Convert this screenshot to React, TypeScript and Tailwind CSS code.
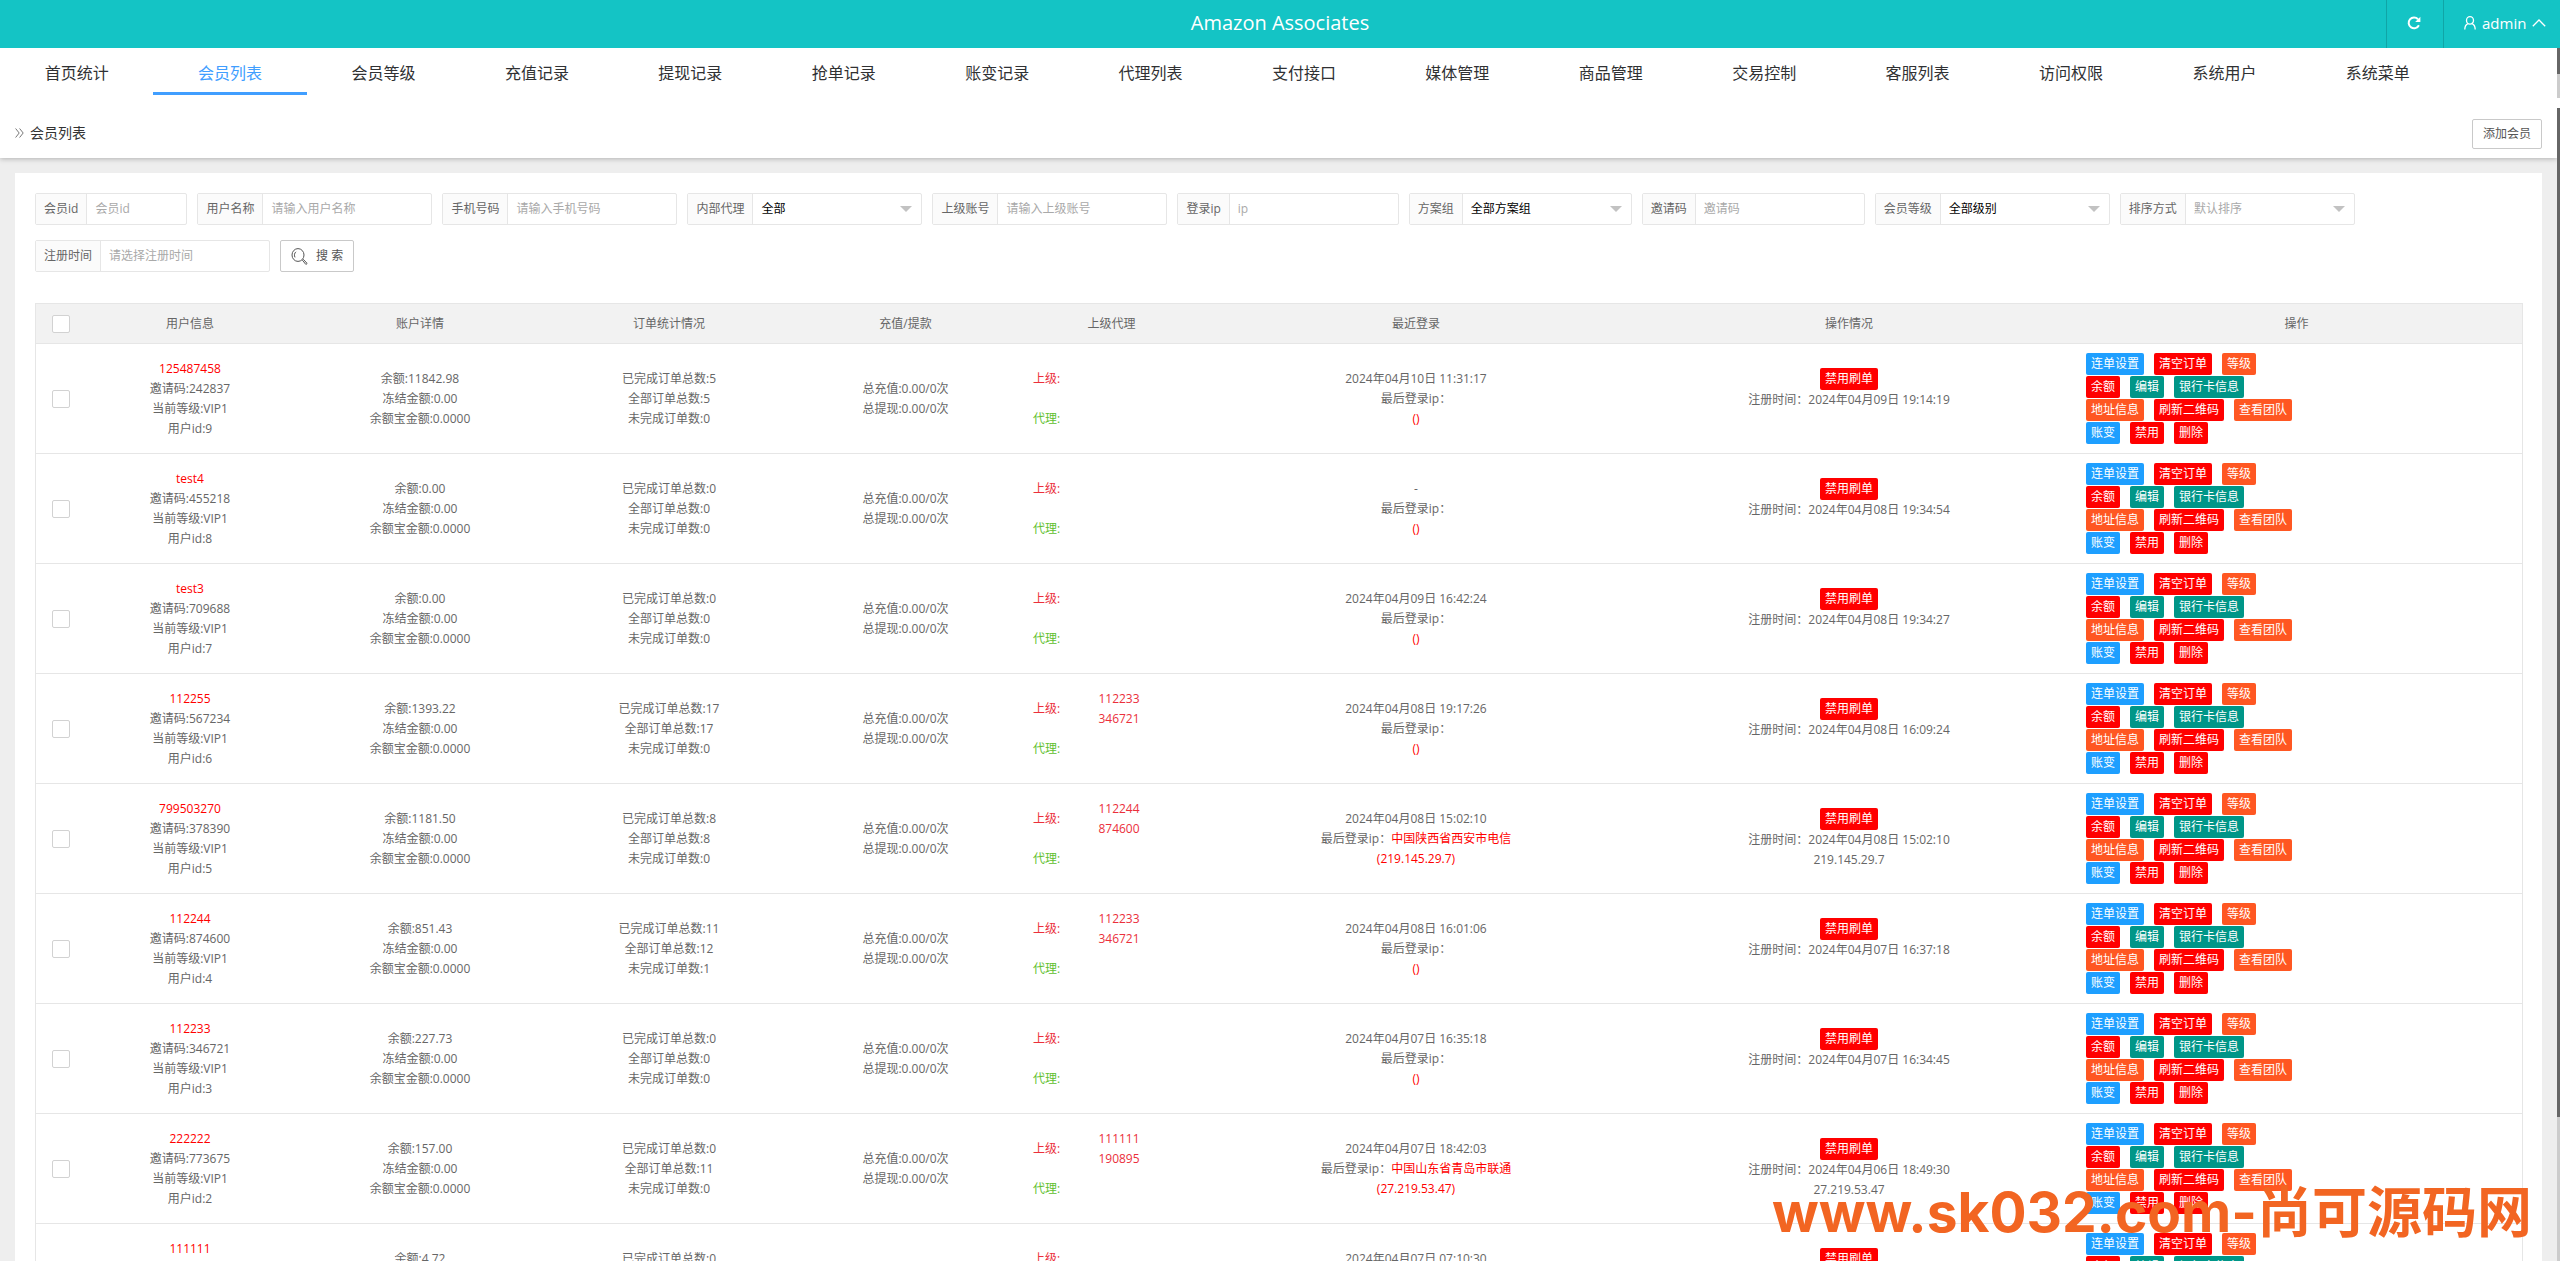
import { useState } from 'react'

const TABS = [
  '首页统计', '会员列表', '会员等级', '充值记录', '提现记录', '抢单记录', '账变记录', '代理列表',
  '支付接口', '媒体管理', '商品管理', '交易控制', '客服列表', '访问权限', '系统用户', '系统菜单',
]

type Filter = {
  id: string
  label: string
  placeholder?: string
  options?: string[]
  muted?: boolean
  narrow?: boolean
}

const FILTERS: Filter[] = [
  { id: 'uid', label: '会员id', placeholder: '会员id', narrow: true },
  { id: 'username', label: '用户名称', placeholder: '请输入用户名称' },
  { id: 'tel', label: '手机号码', placeholder: '请输入手机号码' },
  { id: 'internal', label: '内部代理', options: ['全部', '是', '否'] },
  { id: 'parent', label: '上级账号', placeholder: '请输入上级账号' },
  { id: 'ip', label: '登录ip', placeholder: 'ip' },
  { id: 'group', label: '方案组', options: ['全部方案组'] },
  { id: 'invite', label: '邀请码', placeholder: '邀请码' },
  { id: 'level', label: '会员等级', options: ['全部级别', 'VIP1', 'VIP2'] },
  { id: 'order', label: '排序方式', options: ['默认排序'], muted: true },
  { id: 'regtime', label: '注册时间', placeholder: '请选择注册时间' },
]

type Member = {
  id: number
  name: string
  code: string
  balance: string
  done: number
  total: number
  undone: number
  parent?: [string, string]
  login: string
  area?: string
  ip?: string
  registered: string
}

const MEMBERS: Member[] = [
  { id: 9, name: '125487458', code: '242837', balance: '11842.98', done: 5, total: 5, undone: 0, login: '2024年04月10日 11:31:17', registered: '2024年04月09日 19:14:19' },
  { id: 8, name: 'test4', code: '455218', balance: '0.00', done: 0, total: 0, undone: 0, login: '-', registered: '2024年04月08日 19:34:54' },
  { id: 7, name: 'test3', code: '709688', balance: '0.00', done: 0, total: 0, undone: 0, login: '2024年04月09日 16:42:24', registered: '2024年04月08日 19:34:27' },
  { id: 6, name: '112255', code: '567234', balance: '1393.22', done: 17, total: 17, undone: 0, parent: ['112233', '346721'], login: '2024年04月08日 19:17:26', registered: '2024年04月08日 16:09:24' },
  { id: 5, name: '799503270', code: '378390', balance: '1181.50', done: 8, total: 8, undone: 0, parent: ['112244', '874600'], login: '2024年04月08日 15:02:10', area: '中国陕西省西安市电信', ip: '219.145.29.7', registered: '2024年04月08日 15:02:10' },
  { id: 4, name: '112244', code: '874600', balance: '851.43', done: 11, total: 12, undone: 1, parent: ['112233', '346721'], login: '2024年04月08日 16:01:06', registered: '2024年04月07日 16:37:18' },
  { id: 3, name: '112233', code: '346721', balance: '227.73', done: 0, total: 0, undone: 0, login: '2024年04月07日 16:35:18', registered: '2024年04月07日 16:34:45' },
  { id: 2, name: '222222', code: '773675', balance: '157.00', done: 0, total: 11, undone: 0, parent: ['111111', '190895'], login: '2024年04月07日 18:42:03', area: '中国山东省青岛市联通', ip: '27.219.53.47', registered: '2024年04月06日 18:49:30' },
  { id: 1, name: '111111', code: '190895', balance: '4.72', done: 0, total: 0, undone: 0, login: '2024年04月07日 07:10:30', registered: '2024年04月06日 18:40:12' },
]

const BLUE = 'bg-[#1e9fff]'
const RED = 'bg-[#ff0000]'
const ORANGE = 'bg-[#ff5722]'
const GREEN = 'bg-[#009688]'

const ACTIONS: [string, string][][] = [
  [['连单设置', BLUE], ['清空订单', RED], ['等级', ORANGE]],
  [['余额', RED], ['编辑', GREEN], ['银行卡信息', GREEN]],
  [['地址信息', ORANGE], ['刷新二维码', RED], ['查看团队', ORANGE]],
  [['账变', BLUE], ['禁用', RED], ['删除', RED]],
]

const HEADS = ['用户信息', '账户详情', '订单统计情况', '充值/提款', '上级代理', '最近登录', '操作情况', '操作']

function Tag({ text, color }: { text: string; color: string }) {
  return (
    <button className={`h-[22px] px-[5px] rounded-xs text-xs leading-[22px] text-white ${color}`}>{text}</button>
  )
}

function Check({ label }: { label: string }) {
  return (
    <input
      type="checkbox"
      aria-label={label}
      className="block mx-auto size-[18px] appearance-none rounded-xs border border-[#d2d2d2] bg-white checked:bg-[#5fb878]"
    />
  )
}

function FilterField({ filter }: { filter: Filter }) {
  const width = filter.narrow ? 'w-[99px]' : 'w-[168px]'
  return (
    <div className="flex h-8 rounded-xs border border-[#e6e6e6] bg-white">
      <label htmlFor={filter.id} className="px-2 leading-[30px] bg-[#fbfbfb] border-r border-[#e6e6e6] whitespace-nowrap">
        {filter.label}
      </label>
      {filter.options ? (
        <div className="relative">
          <select
            id={filter.id}
            className={`${width} h-full pl-2 pr-8 appearance-none bg-transparent outline-none ${filter.muted ? 'text-[#a9a9a9]' : 'text-black'}`}
          >
            {filter.options.map(o => <option key={o}>{o}</option>)}
          </select>
          <span className="absolute right-[9px] top-3 border-x-6 border-t-6 border-x-transparent border-t-[#c2c2c2] pointer-events-none" />
        </div>
      ) : (
        <input
          id={filter.id}
          placeholder={filter.placeholder}
          className={`${width} pl-2 outline-none placeholder:text-[#a9a9a9]`}
        />
      )}
    </div>
  )
}

function MemberRow({ member: m }: { member: Member }) {
  return (
    <tr className="h-[110px] text-center [&>td]:border-b [&>td]:border-[#e6e6e6] [&>td]:px-[15px]">
      <td><Check label={`选择 ${m.name}`} /></td>
      <td>
        <a href="#" className="text-[#ff0000]">{m.name}</a>
        <p>邀请码:{m.code}</p>
        <p>当前等级:VIP1</p>
        <p>用户id:{m.id}</p>
      </td>
      <td>
        <p>余额:{m.balance}</p>
        <p>冻结金额:0.00</p>
        <p>余额宝金额:0.0000</p>
      </td>
      <td>
        <p>已完成订单总数:{m.done}</p>
        <p>全部订单总数:{m.total}</p>
        <p>未完成订单数:{m.undone}</p>
      </td>
      <td>
        <p>总充值:0.00/0次</p>
        <p>总提现:0.00/0次</p>
      </td>
      <td>
        <div className="grid grid-cols-[28px_116px] grid-rows-[40px_40px] items-center">
          <span className="text-left text-[#eb2f3b]">上级:</span>
          <div className="text-[#eb2f3b]">{m.parent?.map(p => <p key={p}>{p}</p>)}</div>
          <span className="text-left text-[#5fc02e]">代理:</span>
        </div>
      </td>
      <td>
        <p>{m.login}</p>
        <p>最后登录ip：<span className="text-[#ff0000]">{m.area}</span></p>
        <p className="text-[#ff0000]">({m.ip})</p>
      </td>
      <td>
        <div className="flex flex-col items-center">
          <Tag text="禁用刷单" color={RED} />
          <p>注册时间：{m.registered}</p>
          <p className="h-5">{m.ip}</p>
        </div>
      </td>
      <td>
        <div className="flex flex-col gap-px">
          {ACTIONS.map((line, i) => (
            <div key={i} className="flex gap-2.5">
              {line.map(([text, color]) => <Tag key={text} text={text} color={color} />)}
            </div>
          ))}
        </div>
      </td>
    </tr>
  )
}

export default function App() {
  const [tab, setTab] = useState('会员列表')

  return (
    <div className="relative flex flex-col h-screen overflow-hidden bg-white text-xs leading-5 text-[#666] font-['Open_Sans','Noto_Sans_CJK_SC',sans-serif]">
      {/* Top bar */}
      <header className="grid grid-cols-[1fr_auto_1fr] h-12 shrink-0 bg-[#14c4c5] text-white">
        <h1 className="col-start-2 text-xl leading-[46px]">Amazon Associates</h1>
        <div className="flex justify-end">
          <button aria-label="刷新" className="w-[57px] flex items-center justify-center pr-0.5 pb-0.5 border-l border-[#10a5a6]">
            <svg viewBox="0 0 14 14" className="size-3.5" fill="none" stroke="currentColor" strokeWidth="2">
              <path d="M11.9 9.3A5.4 5.4 0 1 1 11 3.2" />
              <path d="M13.4 0.8V6H8.2Z" fill="currentColor" stroke="none" />
            </svg>
          </button>
          <button className="w-[117px] flex items-center pl-5 pb-0.5 border-l border-[#10a5a6] text-[15px]">
            <svg viewBox="0 0 12 14" className="w-3 h-3.5 mr-1.5" fill="none" stroke="currentColor" strokeWidth="1.3">
              <ellipse cx="6" cy="4.4" rx="3.5" ry="3.7" />
              <path d="M0.8 13.6C0.8 10.2 2.2 8.3 4 7.6M11.2 13.6C11.2 10.2 9.8 8.3 8 7.6" />
            </svg>
            admin
            <svg viewBox="0 0 14 8" className="w-3.5 h-2 ml-1.5" fill="none" stroke="currentColor" strokeWidth="1.3">
              <path d="M0.8 7.2 7 1l6.2 6.2" />
            </svg>
          </button>
        </div>
      </header>

      {/* Module tabs */}
      <div className="relative z-10 flex h-[60px] shrink-0 bg-white">
        <nav className="flex flex-1">
          {TABS.map(t => (
            <button
              key={t}
              onClick={() => setTab(t)}
              className={`w-[6%] h-[47px] pt-1.5 border-b-3 text-base ${
                t === tab ? 'border-[#409eff] text-[#409eff]' : 'border-transparent text-[#303133]'
              }`}
            >
              {t}
            </button>
          ))}
        </nav>
        <div className="w-[3px] h-[50px] bg-[#ccc]"><div className="h-[26px] bg-[#666]" /></div>
      </div>

      <div className="flex flex-1 min-h-0">
        <main className="flex-1 min-w-0 flex flex-col bg-[#eee]">
          <div className="flex items-center justify-between h-[50px] shrink-0 px-[15px] bg-white shadow-[0_1px_5px_rgba(0,0,0,0.25)]">
            <h2 className="flex items-center gap-1.5 text-sm text-[#333]">
              <svg viewBox="0 0 9 10" className="w-[9px] h-2.5" fill="none" stroke="#777" strokeWidth="1">
                <path d="M0.6 0.5 4.2 5 0.6 9.5M4.6 0.5 8.2 5 4.6 9.5" />
              </svg>
              会员列表
            </h2>
            <button className="h-[30px] px-2.5 mt-0.5 rounded-xs border border-[#c9c9c9] text-[#555]">添加会员</button>
          </div>

          <div className="flex-1 min-h-0 mx-[15px] mt-[15px] px-5 pt-5 overflow-hidden bg-white">
            <form className="flex flex-wrap gap-x-2.5 gap-y-[15px]" onSubmit={e => e.preventDefault()}>
              {FILTERS.map(f => <FilterField key={f.id} filter={f} />)}
              <button className="flex items-center gap-2 h-8 px-2.5 rounded-xs border border-[#c9c9c9] text-[#555]">
                <svg viewBox="0 0 17 17" className="size-[17px]" fill="none" stroke="currentColor" strokeWidth="1">
                  <ellipse cx="7" cy="7" rx="6" ry="6.4" />
                  <path d="M4 9.4C3 7.4 3.4 5 5 3.8" />
                  <path d="M11.5 12.3l1-.8 3.6 3.9-1.2 1.1Z" />
                </svg>
                搜 索
              </button>
            </form>

            <table className="w-full mt-[31px] table-fixed border-separate border-spacing-0 border border-b-0 border-[#e6e6e6]">
              <colgroup>
                <col className="w-[49px]" />
                <col className="w-[210px]" />
                <col className="w-[250px]" />
                <col className="w-[248px]" />
                <col className="w-[225px]" />
                <col className="w-[187px]" />
                <col className="w-[422px]" />
                <col className="w-[444px]" />
                <col className="w-[451px]" />
              </colgroup>
              <thead>
                <tr className="h-10 bg-[#f2f2f2] [&>th]:border-b [&>th]:border-[#e6e6e6] [&>th]:font-normal">
                  <th><Check label="全选" /></th>
                  {HEADS.map(h => <th key={h}>{h}</th>)}
                </tr>
              </thead>
              <tbody>
                {MEMBERS.map(m => <MemberRow key={m.id} member={m} />)}
              </tbody>
            </table>
          </div>
        </main>
        <div className="w-[3px] shrink-0 bg-[#ccc]"><div className="h-[87.5%] bg-[#666]" /></div>
      </div>

      <p className="absolute right-7 bottom-4 text-[55px] leading-[66px] font-bold whitespace-nowrap text-[#f26522] pointer-events-none font-['Inter','Noto_Sans_CJK_SC',sans-serif]">
        www.sk032.com-尚可源码网
      </p>
    </div>
  )
}
